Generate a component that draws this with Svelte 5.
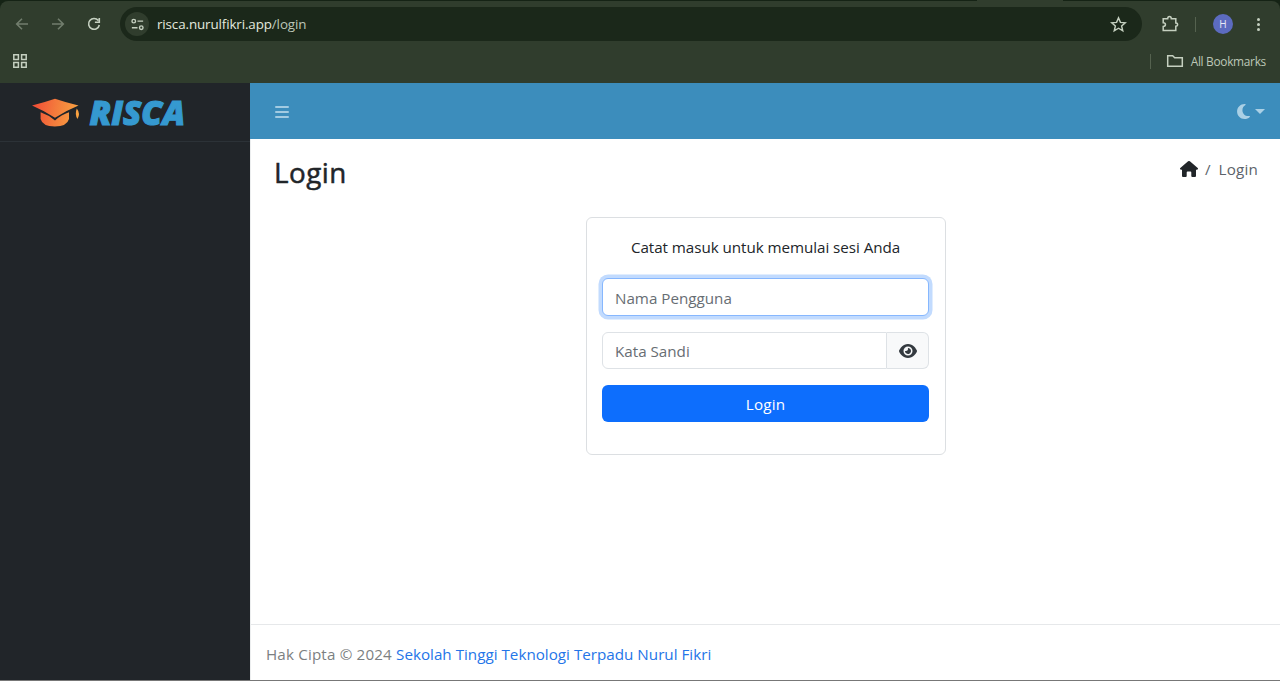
<script>
  let username = $state('');
  let password = $state('');
</script>

<div class="window">
  <header class="chrome">
    <div class="tabs"><i></i></div>
    <div class="toolbar">
      <svg class="nav dim back" viewBox="0 0 16 16"><path d="M14 8H3M8 2.7 2.7 8 8 13.3" /></svg>
      <svg class="nav dim forward" viewBox="0 0 16 16"><path d="M2 8h11M8 2.7 13.3 8 8 13.3" /></svg>
      <svg class="nav reload" viewBox="0 0 16 16"><path d="M12.3 4.6A5.4 5.4 0 1 0 13.3 9M13.3 1.9v4.4H8.9" /></svg>
      <div class="address">
        <span class="site">
          <svg viewBox="0 0 16 16"><circle cx="4" cy="4.4" r="1.9" /><path d="M8 4.4h6M2 11.4h6" /><circle cx="12" cy="11.4" r="1.9" /></svg>
        </span>
        <span class="url">risca.nurulfikri.app<span>/login</span></span>
        <svg class="star" viewBox="0 0 18 18"><path d="m9 2 2.05 4.75 5.15.45-3.9 3.4 1.2 5.05L9 12.95l-4.5 2.7 1.2-5.05-3.9-3.4 5.15-.45z" /></svg>
      </div>
      <svg class="puzzle" viewBox="0 0 18 18"><path d="M2.2 3.7h4.5c0-3 3.6-3 3.6 0h4.5v4.2c2.4 0 2.4 3.4 0 3.4v4.2H2.2v-4.1c3 0 3-3.7 0-3.7z" /></svg>
      <span class="divider"></span>
      <span class="avatar">H</span>
      <span class="dots"><i></i><i></i><i></i></span>
    </div>
    <div class="bookmarks">
      <svg class="apps" viewBox="0 0 16 16"><path d="M1.8 1.8h4.6v4.6H1.8zM9.6 1.8h4.6v4.6H9.6zM1.8 9.6h4.6v4.6H1.8zM9.6 9.6h4.6v4.6H9.6z" /></svg>
      <span class="divider"></span>
      <svg class="folder" viewBox="0 0 18 14"><path d="M1.7 1.7h5l2 2h7.6v8.6H1.7z" /></svg>
      <span class="all">All Bookmarks</span>
    </div>
  </header>

  <div class="app">
    <aside>
      <div class="brand">
        <svg viewBox="0 -14 170 58">
          <defs>
            <linearGradient id="cap" x1="0" x2="47" y1="10" y2="18" gradientUnits="userSpaceOnUse">
              <stop stop-color="#f04b36" /><stop offset=".5" stop-color="#f47b3c" /><stop offset="1" stop-color="#f9a541" />
            </linearGradient>
          </defs>
          <g fill="url(#cap)">
            <path d="M0 8.4Q12 5.5 23 1.7Q34 5.5 46.5 8.4Q34 13.5 23 20.7Q12 13.5 0 8.4z" />
            <path d="M8.6 15.3Q16 17.7 23 23.5Q29.5 17.7 37 15.3V22Q35 29.4 22.8 29.4Q10.5 29.4 8.6 22z" />
            <path d="M44.8 11.4Q48.7 16.4 45.5 22Q42.5 17 44.8 11.4z" />
          </g>
          <text x="57.500" y="27.6" textLength="95.5" lengthAdjust="spacingAndGlyphs">RISCA</text>
        </svg>
      </div>
    </aside>

    <div class="main">
      <nav class="topbar">
        <span class="menu"><i></i><i></i><i></i></span>
        <span class="theme">
          <svg viewBox="0 32 384 448"><path d="M223.5 32C100 32 0 132.3 0 256S100 480 223.5 480c60.6 0 115.5-24.2 155.8-63.4c5-4.9 6.3-12.5 3.1-18.7s-10.1-9.7-17-8.5c-9.8 1.7-19.8 2.6-30.1 2.6c-96.9 0-175.5-78.8-175.5-176c0-65.8 36-123.1 89.3-153.3c6.1-3.5 9.2-10.5 7.7-17.3s-7.3-11.9-14.3-12.5c-6.3-.5-12.6-.8-19-.8z" /></svg>
          <i></i>
        </span>
      </nav>
      <div class="heading">
        <h1>Login</h1>
        <div class="crumbs">
          <svg viewBox="0 0 18 16"><path d="M9 0q.5 0 .9.3l7.8 6.8q.5.5.2 1-.3.6-.9.6h-1V15q0 1-1 1h-2.7q-1 0-1-1v-3.6q0-.8-.8-.8h-3q-.8 0-.8.8V15q0 1-1 1H3q-1 0-1-1V8.7H1q-.6 0-.9-.6-.3-.5.2-1L8.1.3Q8.5 0 9 0z" /></svg>
          <span class="slash">/</span>
          <span class="here">Login</span>
        </div>
      </div>
      <main>
        <form class="card" onsubmit={(e) => e.preventDefault()}>
          <p>Catat masuk untuk memulai sesi Anda</p>
          <input class="field user" placeholder="Nama Pengguna" bind:value={username} />
          <div class="group">
            <input class="field" type="password" placeholder="Kata Sandi" bind:value={password} />
            <span class="eye">
              <svg viewBox="0 32 576 448"><path d="M288 32c-80.8 0-145.5 36.8-192.6 80.6C48.6 156 17.3 208 2.5 243.7c-3.3 7.9-3.3 16.7 0 24.6C17.3 304 48.6 356 95.4 399.4C142.5 443.2 207.2 480 288 480s145.5-36.8 192.6-80.6c46.8-43.5 78.1-95.4 93-131.1c3.3-7.9 3.3-16.7 0-24.6c-14.9-35.7-46.2-87.7-93-131.1C433.5 68.8 368.8 32 288 32zM144 256a144 144 0 1 1 288 0 144 144 0 1 1 -288 0zm144-64c0 35.3-28.7 64-64 64c-7.1 0-13.9-1.2-20.3-3.3c-5.5-1.8-11.9 1.6-11.7 7.4c.3 6.9 1.3 13.8 3.2 20.7c13.7 51.2 66.4 81.6 117.6 67.9s81.6-66.4 67.9-117.6c-11.1-41.5-47.8-69.4-88.6-71.1c-5.8-.2-9.2 6.1-7.4 11.7c2.1 6.4 3.3 13.2 3.3 20.3z" /></svg>
            </span>
          </div>
          <button>Login</button>
        </form>
      </main>
      <footer>Hak Cipta © 2024 <a href="#top">Sekolah Tinggi Teknologi Terpadu Nurul Fikri</a></footer>
    </div>
  </div>
</div>

<style>
  :global(body) { margin: 0; overflow: hidden; }
  * { box-sizing: border-box; }
  .window { width: 1280px; height: 681px; display: flex; flex-direction: column; border-bottom: 1px solid #777; font: 15.2px/24px "Segoe UI", "Open Sans", sans-serif; color: #212529; }
  svg { display: block; flex: none; }

  .chrome { height: 83px; flex: none; background: #152315; color: #d5dfcf; }
  .tabs { height: 1px; padding-left: 977px; }
  .tabs i { display: block; width: 86px; height: 1px; background: #303d2d; }
  .toolbar { height: 47px; display: flex; align-items: center; background: #303d2d; border-radius: 8px 8px 0 0; padding: 0 0 1px 14px; }
  .chrome svg { fill: none; stroke: #c5d0c0; stroke-width: 1.5; }
  .chrome svg.nav { stroke-width: 1.6; }
  .nav { width: 16px; height: 16px; }
  .chrome svg.dim { stroke: #717d6d; }
  .forward { margin-left: 20px; }
  .reload { margin-left: 20px; }
  .address { width: 1022px; height: 34px; margin-left: 18px; border-radius: 17px; background: #1b281a; display: flex; align-items: center; padding: 0 15px 0 5px; }
  .site { width: 24px; height: 24px; border-radius: 50%; background: #303d2d; display: flex; align-items: center; justify-content: center; }
  .site svg { width: 15px; height: 15px; }
  .url { margin-left: 8px; font-size: 13.4px; letter-spacing: -.12px; color: #e3e9df; }
  .url span { color: #bdc6b8; }
  .star { width: 17px; height: 17px; margin-left: auto; }
  .puzzle { width: 18px; height: 18px; margin-left: 19px; }
  .divider { width: 1px; height: 15px; background: #55624f; }
  .toolbar .divider { margin-left: 16px; }
  .avatar { width: 20px; height: 20px; margin-left: 17px; border-radius: 50%; background: #5c6bc0; color: #e8eaf6; font-size: 10px; line-height: 20px; text-align: center; }
  .dots { display: flex; flex-direction: column; gap: 2px; margin-left: 24px; }
  .dots i { width: 3px; height: 3px; border-radius: 50%; background: #c5d0c0; }
  .bookmarks { height: 35px; display: flex; align-items: center; background: #303d2d; padding: 0 14px 9px 12px; }
  .apps { width: 16px; height: 16px; }
  .bookmarks .divider { margin-left: auto; }
  .folder { width: 18px; height: 14px; margin-left: 15px; }
  .all { margin-left: 7px; font-size: 11.9px; letter-spacing: -.3px; color: #bdc7b7; }

  .app { flex: 1; display: flex; min-height: 0; }
  aside { width: 250px; background: #212529; }
  .brand { height: 59px; padding-left: 32px; border-bottom: 1px solid #2c3237; }
  .brand svg { width: 170px; height: 58px; }
  .brand text { font: italic 800 33px "Open Sans", sans-serif; fill: #3599d0; stroke: #3599d0; stroke-width: 1.1px; }
  .main { flex: 1; display: flex; flex-direction: column; background: #fff; border-left: 1px solid #eceeef; }
  .topbar { height: 56px; flex: none; margin-left: -1px; background: #3c8dbc; display: flex; align-items: center; justify-content: space-between; padding: 0 15px 0 25px; }
  .menu { display: flex; flex-direction: column; gap: 3px; margin-top: 2px; }
  .menu i { width: 14px; height: 2.3px; background: #a2cbe2; border-radius: 1px; }
  .theme { display: flex; align-items: center; gap: 5px; }
  .theme svg { width: 13px; height: 15px; fill: #aad0e5; }
  .theme i { border: 5px solid transparent; border-top-color: #aad0e5; border-bottom: 0; }
  .heading { height: 78px; flex: none; display: flex; justify-content: space-between; padding: 14px 22px 0 23px; }
  h1 { margin: 0; font-size: 27.8px; line-height: 39px; font-weight: 500; letter-spacing: .5px; -webkit-text-stroke: .5px #212529; }
  .crumbs { display: flex; height: 31px; align-items: center; color: #5c636a; }
  .crumbs svg { width: 18px; height: 16px; fill: #212529; }
  .slash { margin-left: 7px; }
  .here { margin-left: 8px; letter-spacing: .2px; }
  main { flex: 1; }
  .card { width: 360px; height: 238px; margin: 0 0 0 335px; padding: 17px 16px 17px 15px; border: 1px solid #dcdfe2; border-radius: 6px; }
  p { margin: 0 0 19px; text-align: center; white-space: nowrap; letter-spacing: -.05px; }
  .field { display: block; width: 100%; height: 38px; border: 1px solid #dee2e6; border-radius: 6px; padding: 1px 12px 0; background: #fff; font: inherit; color: #212529; outline: 0; }
  .field::placeholder { color: #676d73; opacity: 1; }
  .user { border-color: #86b7fe; box-shadow: 0 0 0 3.5px #c2dbfe; }
  .group { display: flex; margin-top: 16px; }
  .group .field { flex: 1; width: auto; min-width: 0; height: 37px; border-radius: 6px 0 0 6px; }
  .eye { width: 42px; height: 37px; display: flex; align-items: center; justify-content: center; background: #f8f9fa; border: 1px solid #dee2e6; border-left: 0; border-radius: 0 6px 6px 0; }
  .eye svg { width: 18px; height: 14px; fill: #343a40; }
  button { display: block; width: 100%; height: 37px; margin-top: 16px; border: 0; border-radius: 6px; background: #0d6efd; color: #fff; font: inherit; letter-spacing: .2px; padding: 1px 0 0; }
  footer { height: 56px; flex: none; padding: 17px 15px; border-top: 1px solid #e6e8ea; color: #7c7f82; white-space: nowrap; letter-spacing: .16px; }
  footer a { color: #2475e8; text-decoration: none; letter-spacing: .01px; }
</style>
